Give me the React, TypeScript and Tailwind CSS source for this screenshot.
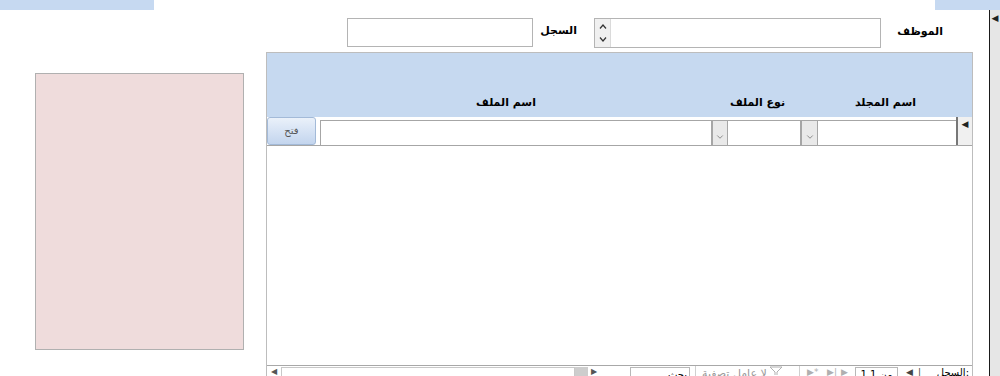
import { ChevronDown } from "lucide-react";

const Label = ({ text, className }: { text: string; className?: string }) => (
  <span className={`inline-block text-[11px] font-bold leading-none ${className ?? ""}`}>{text}</span>
);

const DropBtn = ({ w }: { w: string }) => (
  <div className={`${w} h-[26px] bg-[#e9e9e9] border border-[#a6a6a6] flex items-end justify-center pb-[3px]`}>
    <ChevronDown size={10} strokeWidth={1.5} className="text-[#555]" />
  </div>
);

const TopRow = () => (
  <div className="h-[42px] shrink-0 flex items-start pt-[8px] leading-none">
    {/* السجل */}
    <div className="ml-[81px] w-[186px] h-[29px] border border-[#b4b4b4] bg-white" />
    <div className="w-[61px] text-right pr-[17px] pt-[3px]">
      <Label text="السجل" />
    </div>
    {/* الموظف combo */}
    <div className="w-[287px] h-[30px] border border-[#b4b4b4] bg-white flex">
      <div className="w-[16px] bg-[#f0f0f0] border-r border-[#dadada] flex flex-col items-center justify-between py-[5px]">
        <svg width="8" height="5" viewBox="0 0 8 5">
          <polyline points="1,4.5 4,1 7,4.5" fill="none" stroke="#333" strokeWidth="1.2" />
        </svg>
        <svg width="8" height="5" viewBox="0 0 8 5">
          <polyline points="1,0.5 4,4 7,0.5" fill="none" stroke="#333" strokeWidth="1.2" />
        </svg>
      </div>
    </div>
    <div className="flex-1 text-right pr-[46px] pt-[4px]">
      <Label text="الموظف" />
    </div>
  </div>
);

const BottomBar = () => (
  <div className="h-[22px] shrink-0 border-t border-[#a8a8a8] flex text-[10px] leading-none text-[#999]">
    {/* horizontal scrollbar */}
    <div className="w-[333px] flex pt-[1px]">
      <div className="w-[14px] flex justify-center pt-[1px] text-[#555] text-[8px]">◀</div>
      <div className="flex-1 border border-[#c8c8c8] bg-white" />
      <div className="w-[13px] bg-[#cdcdcd]" />
      <div className="w-[12px] flex justify-center pt-[1px] text-[#555] text-[8px]">▶</div>
    </div>
    {/* search */}
    <div className="w-[96px] flex pt-[1px] pl-[30px] pr-[5px] border-r border-[#d0d0d0]">
      <div className="flex-1 h-[16px] border border-[#b8b8b8] bg-white text-right pr-[2px] pt-[2px] text-black">
        بحث
      </div>
    </div>
    {/* filter */}
    <div className="w-[104px] flex items-start gap-[2px] pl-[6px] pt-[2px] border-r border-[#d0d0d0] text-[11px]">
      <span>لا عامل تصفية</span>
      <svg width="14" height="9" viewBox="0 0 14 9" className="-mt-[2px]">
        <path d="M1 1 H13 L8 6 V9 M6 9 V6 L1 1" fill="none" stroke="#b0b0b0" strokeWidth="1" />
      </svg>
    </div>
    {/* navigation */}
    <div className="flex-1 flex items-start pt-[2px] pl-[7px] text-[#b0b0b0] text-[9px]">
      <span className="w-[20px]">▶*</span>
      <span className="w-[14px]">▶|</span>
      <span className="w-[14px]">▶</span>
      <div className="w-[43px] h-[16px] -mt-[1px] border border-[#b8b8b8] bg-white text-black text-[10px] text-center pt-[2px]">
        1 من 1
      </div>
      <span className="w-[14px] pl-[8px] text-[#444]">◀</span>
      <span className="w-[14px] pl-[6px] text-[#444]">|◀</span>
      <span className="ml-auto pr-[3px] text-black text-[10px]">السجل:</span>
    </div>
  </div>
);

const Subform = () => (
  <div className="w-[707px] h-[324px] shrink-0 border-l border-t border-r border-[#bdbdbd] flex flex-col overflow-hidden">
    {/* header */}
    <div className="h-[64px] shrink-0 bg-[#c6d9f0] flex items-end pb-[8px] leading-none">
      <div className="w-[53px]" />
      <div className="w-[392px] text-center pr-[20px]">
        <Label text="اسم الملف" />
      </div>
      <div className="w-[89px] text-center pl-[2px]">
        <Label text="نوع الملف" />
      </div>
      <div className="w-[155px] text-center pl-[14px]">
        <Label text="اسم المجلد" />
      </div>
      <div className="w-[16px]" />
    </div>
    {/* record row */}
    <div className="h-[29px] shrink-0 flex border-b border-[#a6a6a6]">
      <div className="w-[53px]">
        <button className="w-[49px] h-[28px] rounded-[3px] border border-[#a3bad8] bg-gradient-to-b from-[#eaf1fa] to-[#c3d5ee] text-[10px] text-[#555] leading-none">
          فتح
        </button>
      </div>
      <div className="w-[392px] pt-[3px]">
        <div className="h-[26px] border border-[#a6a6a6] bg-white" />
      </div>
      <div className="w-[89px] pt-[3px] flex">
        <DropBtn w="w-[16px]" />
        <div className="flex-1 h-[26px] border-y border-r border-[#a6a6a6] bg-white" />
      </div>
      <div className="w-[155px] pt-[3px] flex">
        <DropBtn w="w-[17px]" />
        <div className="flex-1 h-[26px] border-y border-[#a6a6a6] bg-white" />
      </div>
      <div className="w-[16px] border-l-2 border-[#777] bg-[#f0f0f0] flex justify-center pt-[3px] text-[9px] leading-none text-[#222]">
        ◀
      </div>
    </div>
    {/* empty body */}
    <div className="h-[219px] shrink-0 bg-white" />
    <BottomBar />
  </div>
);

export default function App() {
  return (
    <div className="w-[1000px] h-[376px] overflow-hidden bg-white flex flex-col font-['DejaVu_Sans',sans-serif] text-black">
      {/* top strip */}
      <div className="h-[10px] shrink-0 flex">
        <div className="w-[154px] bg-[#c6d9f1]" />
        <div className="flex-1" />
        <div className="w-[65px] bg-[#c6d9f1]" />
      </div>
      <div className="flex flex-1 min-h-0">
        {/* picture frame */}
        <div className="w-[266px] shrink-0 pt-[63px] pl-[35px]">
          <div className="w-[209px] h-[277px] bg-[#efdcdc] border border-[#b0b0b0]" />
        </div>
        <div className="w-[723px] shrink-0 flex flex-col">
          <TopRow />
          <Subform />
        </div>
        {/* main form record selector */}
        <div className="w-[11px] shrink-0 border-l border-[#1a1a1a] bg-[#e6e6e6] flex justify-center pt-[4px] text-[9px] leading-none text-[#222]">
          ◀
        </div>
      </div>
    </div>
  );
}
